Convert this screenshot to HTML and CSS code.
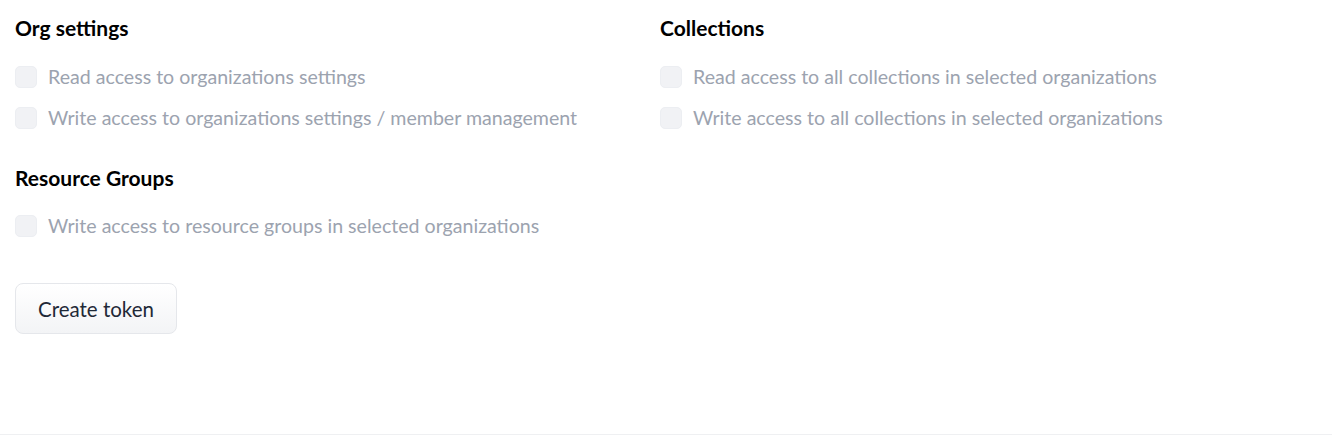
FILE: index.html
```html
<!DOCTYPE html>
<html lang="en">
<head>
<meta charset="utf-8">
<title>Token permissions</title>
<link rel="stylesheet" href="styles.css">
</head>
<body>
<main class="page">
  <div class="grid">
    <section class="group">
      <h3 class="group-title">Org settings</h3>
      <label class="perm"><span class="box"></span><span class="perm-text">Read access to organizations settings</span></label>
      <label class="perm"><span class="box"></span><span class="perm-text">Write access to organizations settings / member management</span></label>
    </section>
    <section class="group">
      <h3 class="group-title">Collections</h3>
      <label class="perm"><span class="box"></span><span class="perm-text">Read access to all collections in selected organizations</span></label>
      <label class="perm"><span class="box"></span><span class="perm-text">Write access to all collections in selected organizations</span></label>
    </section>
    <section class="group group-last">
      <h3 class="group-title">Resource Groups</h3>
      <label class="perm"><span class="box"></span><span class="perm-text">Write access to resource groups in selected organizations</span></label>
    </section>
  </div>
  <button class="btn" type="button">Create token</button>
</main>
<footer class="foot"></footer>
</body>
</html>
```
FILE: styles.css
```css
* { box-sizing: border-box; }
html, body { margin: 0; background: #fff; }
body {
  font-family: Lato, "Noto Sans", "Liberation Sans", sans-serif;
  color: #111827;
}
.page {
  height: 434px;
  padding: 15px 15px 0 15px;
}
.grid {
  display: grid;
  grid-template-columns: 621px 621px;
  column-gap: 24px;
  row-gap: 27px;
}
.group { display: flex; flex-direction: column; }
.group-title {
  margin: 0 0 15px 0;
  font-size: 21px;
  line-height: 26px;
  font-weight: 700;
  color: #000;
}
.group-last .group-title { margin-bottom: 14px; }
.perm {
  display: flex;
  align-items: center;
  gap: 11px;
  height: 41px;
}
.box {
  width: 22px;
  height: 22px;
  flex: none;
  border-radius: 5px;
  background: #f1f2f5;
  border: 1px solid #eceef2;
}
.perm-text {
  font-size: 19.6px;
  color: #9ca3af;
}
.btn {
  margin-top: 37px;
  width: 162px;
  height: 51px;
  border: 1px solid #e5e7eb;
  border-radius: 8px;
  background: linear-gradient(to bottom, #ffffff, #f3f4f6);
  font-family: inherit;
  font-size: 20.5px;
  color: #1f2937;
  padding: 0;
}
.foot {
  border-top: 1px solid #eff0f2;
  height: 3px;
}
```
